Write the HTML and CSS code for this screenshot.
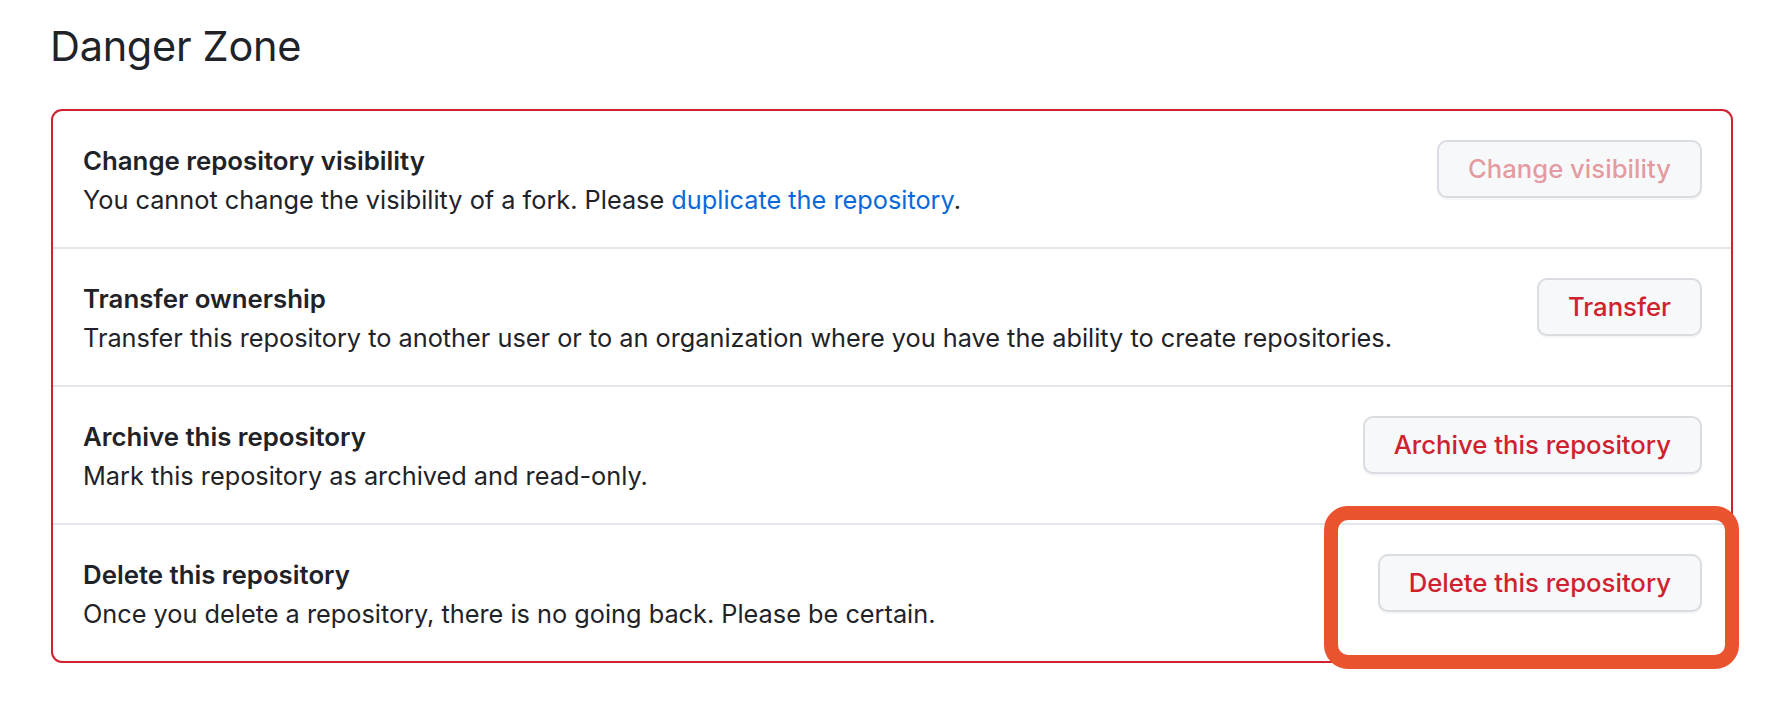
FILE: index.html
```html
<!DOCTYPE html>
<html lang="en">
<head>
<meta charset="utf-8">
<title>Danger Zone</title>
<link rel="stylesheet" href="styles.css">
</head>
<body>
<div class="page">
  <h2 class="zone-title">Danger Zone</h2>
  <ul class="danger-box">
    <li class="danger-row">
      <div class="row-text">
        <strong class="row-title">Change repository visibility</strong>
        <p class="row-desc">You cannot change the visibility of a fork. Please <a class="link" href="#">duplicate the repository</a>.</p>
      </div>
      <div class="row-action">
        <button class="btn btn-danger" disabled>Change visibility</button>
      </div>
    </li>
    <li class="danger-row">
      <div class="row-text">
        <strong class="row-title">Transfer ownership</strong>
        <p class="row-desc">Transfer this repository to another user or to an organization where you have the ability to create repositories.</p>
      </div>
      <div class="row-action">
        <button class="btn btn-danger">Transfer</button>
      </div>
    </li>
    <li class="danger-row">
      <div class="row-text">
        <strong class="row-title">Archive this repository</strong>
        <p class="row-desc">Mark this repository as archived and read-only.</p>
      </div>
      <div class="row-action">
        <button class="btn btn-danger">Archive this repository</button>
      </div>
    </li>
    <li class="danger-row">
      <div class="row-text">
        <strong class="row-title">Delete this repository</strong>
        <p class="row-desc">Once you delete a repository, there is no going back. Please be certain.</p>
      </div>
      <div class="row-action highlighted">
        <button class="btn btn-danger">Delete this repository</button>
        <span class="annotation" aria-hidden="true"></span>
      </div>
    </li>
  </ul>
</div>
</body>
</html>
```

FILE: styles.css
```css
* {
  box-sizing: border-box;
}

html, body {
  margin: 0;
  padding: 0;
  background: #ffffff;
}

body {
  font-family: Inter, "Noto Sans", "Liberation Sans", sans-serif;
  color: #1f2328;
  min-height: 720px;
}

.page {
  padding: 20px 51px 58px 50px;
}

.zone-title {
  margin: 0 0 37px 0;
  font-size: 41.5px;
  line-height: 52px;
  font-weight: 400;
  color: #1f2328;
  letter-spacing: -0.3px;
}

.danger-box {
  list-style: none;
  margin: 0 0 0 1px;
  padding: 0;
  border: 2px solid #cf222e;
  border-radius: 11px;
}

.danger-row {
  display: flex;
  align-items: flex-start;
  padding: 29px 29px 28px 30px;
}

.danger-row + .danger-row {
  border-top: 2px solid #e3e6ea;
}

.row-text {
  flex: 1 1 auto;
  min-width: 0;
}

.row-title {
  display: block;
  margin-top: 2px;
  font-size: 25.8px;
  line-height: 38px;
  font-weight: 600;
  color: #1f2328;
}

.row-desc {
  margin: 1px 0 0 0;
  font-size: 25.3px;
  line-height: 38px;
  color: #1f2328;
}

.link {
  color: #0969da;
  text-decoration: none;
}

.row-action {
  flex: 0 0 auto;
  display: flex;
}

.btn {
  display: flex;
  align-items: center;
  justify-content: center;
  height: 58px;
  padding: 0 29px;
  font-family: inherit;
  font-size: 25.7px;
  font-weight: 500;
  line-height: 1;
  background: #f6f8fa;
  border: 2px solid #d9dce0;
  border-radius: 10px;
  box-shadow: 0 2px 0 rgba(31, 35, 40, 0.04);
  cursor: pointer;
}

.btn-danger {
  color: #cf222e;
}

.btn-danger:disabled {
  color: rgba(207, 34, 46, 0.45);
  cursor: default;
}

.highlighted {
  position: relative;
}

.annotation {
  position: absolute;
  left: -54px;
  right: -37px;
  top: -48px;
  bottom: -57px;
  border: 14px solid #e9532e;
  border-radius: 24px;
  pointer-events: none;
}
```
